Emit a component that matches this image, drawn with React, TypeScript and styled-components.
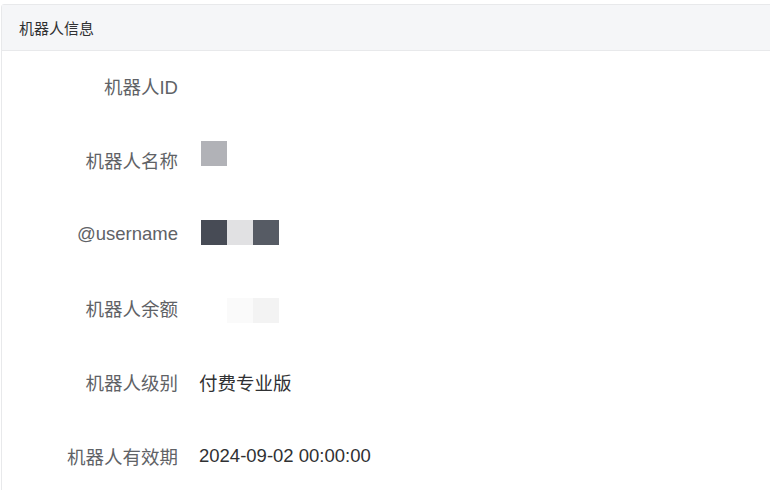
import React from "react";
import styled, { createGlobalStyle } from "styled-components";

const GlobalStyle = createGlobalStyle`
  html, body {
    margin: 0;
    padding: 0;
    background: #ffffff;
  }
  body {
    font-family: "Liberation Sans", "Noto Sans CJK SC", sans-serif;
    overflow: hidden;
  }
`;

interface Row {
  label: string;
  value?: string;
  blocks?: string[];
  lift?: number;
}

const rows: Row[] = [
  { label: "机器人ID" },
  { label: "机器人名称", blocks: ["#b1b2b7"], lift: 7 },
  { label: "@username", blocks: ["#474b55", "#e1e1e3", "#565b64"], lift: 2 },
  { label: "机器人余额", blocks: ["#ffffff", "#fafafa", "#f3f3f3"], lift: -2 },
  { label: "机器人级别", value: "付费专业版" },
  { label: "机器人有效期", value: "2024-09-02 00:00:00" },
];

export default function App() {
  return (
    <>
      <GlobalStyle />
      <Page>
        <Card>
          <CardHeader>机器人信息</CardHeader>
          <CardBody>
            {rows.map((row) => (
              <InfoRow key={row.label}>
                <Label>{row.label}</Label>
                <Value>
                  {row.value}
                  {row.blocks && (
                    <Blur lift={row.lift ?? 0}>
                      {row.blocks.map((c, i) => (
                        <Pixel key={i} color={c} />
                      ))}
                    </Blur>
                  )}
                </Value>
              </InfoRow>
            ))}
          </CardBody>
        </Card>
      </Page>
    </>
  );
}

const Page = styled.div`
  padding: 4px 0 0 1px;
  width: 770px;
  height: 490px;
  box-sizing: border-box;
  overflow: hidden;
`;

const Card = styled.div`
  width: 800px;
  border: 1px solid #e8e9eb;
  border-radius: 3px;
  background: #fff;
`;

const CardHeader = styled.div`
  height: 45px;
  display: flex;
  align-items: center;
  padding-left: 17px;
  background: #f5f6f8;
  border-bottom: 1px solid #e8e9eb;
  font-size: 15px;
  color: #303133;
`;

const CardBody = styled.div`
  display: flex;
  flex-direction: column;
  margin-top: -2px;
`;

const InfoRow = styled.div`
  height: 74px;
  display: grid;
  grid-template-columns: 176px 1fr;
  column-gap: 21px;
  align-items: center;
`;

const Label = styled.div`
  text-align: right;
  font-size: 18.5px;
  color: #606266;
`;

const Value = styled.div`
  font-size: 18.5px;
  color: #303133;
  display: flex;
  align-items: center;
`;

const Blur = styled.div<{ lift: number }>`
  display: flex;
  margin-left: 2px;
  transform: translateY(${(p) => -p.lift}px);
`;

const Pixel = styled.div<{ color: string }>`
  width: 26px;
  height: 25px;
  background: ${(p) => p.color};
`;
